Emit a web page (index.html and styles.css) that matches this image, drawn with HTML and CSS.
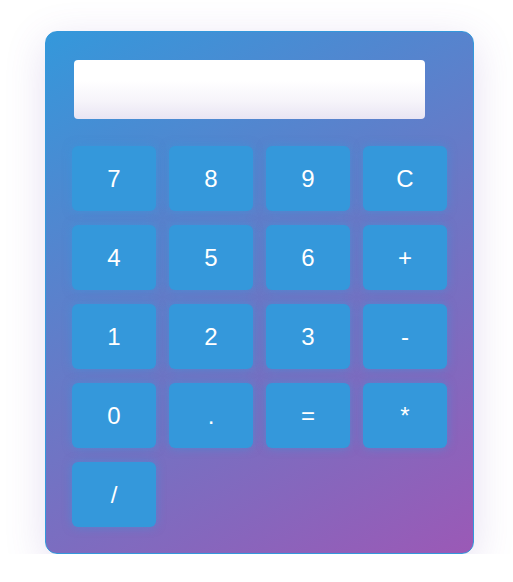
FILE: index.html
```html
<!DOCTYPE html>
<html>
<head>
<meta charset="utf-8">
<link rel="stylesheet" href="styles.css">
</head>
<body>
<div class="calc">
  <div class="display"></div>
  <div class="keys">
    <button class="key">7</button>
    <button class="key">8</button>
    <button class="key">9</button>
    <button class="key">C</button>
    <button class="key">4</button>
    <button class="key">5</button>
    <button class="key">6</button>
    <button class="key">+</button>
    <button class="key">1</button>
    <button class="key">2</button>
    <button class="key">3</button>
    <button class="key">-</button>
    <button class="key">0</button>
    <button class="key">.</button>
    <button class="key">=</button>
    <button class="key">*</button>
    <button class="key">/</button>
  </div>
</div>
</body>
</html>
```
FILE: styles.css
```css
html, body {
  margin: 0;
  padding: 0;
  background: #ffffff;
}
body {
  padding: 31px 0 0 45px;
  font-family: "Liberation Sans", Arial, sans-serif;
}
.calc {
  box-sizing: border-box;
  width: 429px;
  height: 523px;
  border: 1px solid #3498db;
  border-radius: 12px;
  background: linear-gradient(150deg, #3498db 0%, #6a78c6 50%, #9b59b6 100%);
  padding: 28px 26px 26px 26px;
  box-shadow: 0 10px 40px rgba(110, 70, 180, 0.18);
}
.display {
  box-sizing: border-box;
  width: 351px;
  height: 59px;
  margin-left: 2px;
  border-radius: 4px;
  background: linear-gradient(to bottom, #ffffff 0%, #ffffff 35%, #f6f4fa 70%, #e9e5f3 100%);
}
.keys {
  margin-top: 27px;
  display: grid;
  grid-template-columns: repeat(4, 84px);
  grid-auto-rows: 65px;
  column-gap: 13px;
  row-gap: 14px;
}
.key {
  border: none;
  border-radius: 6px;
  background: #3498db;
  color: #ffffff;
  font-family: "Liberation Sans", Arial, sans-serif;
  font-size: 24px;
  padding: 0;
  box-shadow: 0 0 10px rgba(52, 152, 219, 0.55);
}
```
